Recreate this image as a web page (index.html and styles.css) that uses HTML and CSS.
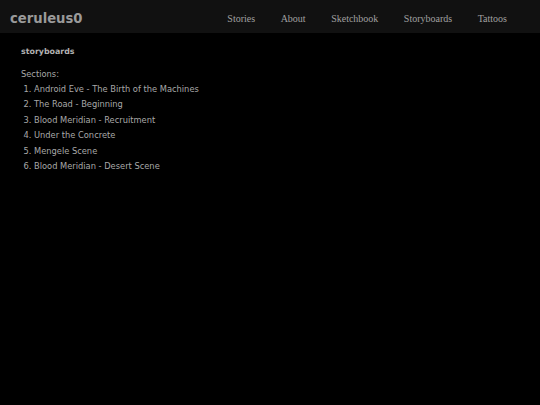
FILE: index.html
```html
<!DOCTYPE html>
<html>
<head>
<meta charset="utf-8">
<link rel="stylesheet" href="styles.css">
</head>
<body>
<header class="topbar">
  <div class="logo">ceruleus0</div>
  <nav class="nav">
    <a href="#">Stories</a>
    <a href="#">About</a>
    <a href="#">Sketchbook</a>
    <a href="#">Storyboards</a>
    <a href="#">Tattoos</a>
  </nav>
</header>
<main class="content">
  <h1 class="title">storyboards</h1>
  <p class="label">Sections:</p>
  <ol class="sections">
    <li>Android Eve - The Birth of the Machines</li>
    <li>The Road - Beginning</li>
    <li>Blood Meridian - Recruitment</li>
    <li>Under the Concrete</li>
    <li>Mengele Scene</li>
    <li>Blood Meridian - Desert Scene</li>
  </ol>
</main>
</body>
</html>
```
FILE: styles.css
```css
html, body {
  margin: 0;
  padding: 0;
  background: #000;
  height: 100%;
}
body {
  font-family: "DejaVu Sans", Verdana, sans-serif;
  color: #a8a8a8;
}
.topbar {
  height: 33px;
  background: #111;
  display: flex;
  align-items: center;
  justify-content: space-between;
  padding: 0 33px 0 10px;
}
.logo {
  font-weight: bold;
  font-size: 13.2px;
  color: #9a9a9a;
  padding-top: 3px;
}
.nav {
  display: flex;
  gap: 25.5px;
  font-family: "Liberation Serif", "Times New Roman", serif;
  font-size: 10px;
  padding-top: 3px;
}
.nav a {
  color: #a0a0a0;
  text-decoration: none;
}
.content {
  padding: 14px 21px;
}
.title {
  font-size: 7.9px;
  font-weight: bold;
  margin: 0 0 12px 0;
  color: #b0b0b0;
}
.label {
  font-size: 8.3px;
  margin: 0 0 1px 0;
  line-height: 13px;
}
.sections {
  margin: 0;
  padding: 0 0 0 13px;
  font-size: 8.3px;
  line-height: 15.4px;
}
```
